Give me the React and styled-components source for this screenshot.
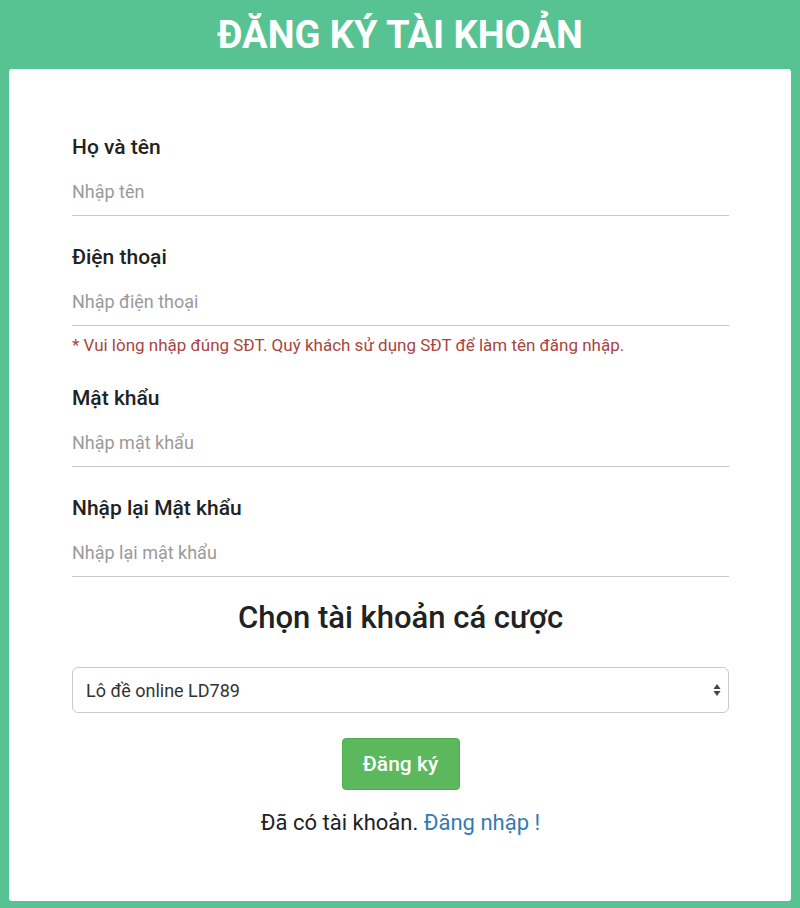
import React from "react";
import styled, { createGlobalStyle } from "styled-components";

const GlobalStyle = createGlobalStyle`
  html, body {
    margin: 0;
    padding: 0;
    background: #57c392;
  }
  * {
    box-sizing: border-box;
  }
`;

const Page = styled.div`
  min-height: 908px;
  background: #57c392;
  padding: 0 9px;
  font-family: Roboto, "Liberation Sans", sans-serif;
`;

const Header = styled.div`
  height: 69px;
  display: flex;
  align-items: center;
  justify-content: center;
`;

const Title = styled.h1`
  margin: 0;
  color: #fff;
  font-size: 38px;
  font-weight: 700;
  line-height: 64px;
`;

const Card = styled.div`
  background: #fff;
  border-radius: 3px;
  height: 832px;
  padding: 63px 62px 0 63px;
  display: flex;
  flex-direction: column;
`;

const Field = styled.div`
  display: flex;
  flex-direction: column;
  margin-bottom: ${(p) => (p.$tight ? "0" : "26px")};
`;

const Label = styled.label`
  font-size: 21px;
  font-weight: 500;
  color: #222;
  line-height: 30px;
`;

const Input = styled.input`
  border: none;
  border-bottom: 1px solid #c8c8c8;
  outline: none;
  height: 44px;
  margin-top: 10px;
  padding: 0 0 4px 0;
  font-family: Roboto, "Liberation Sans", sans-serif;
  font-size: 18px;
  color: #333;
  background: transparent;

  &::placeholder {
    color: #9a9a9a;
  }
`;

const Note = styled.p`
  margin: 9px 0 28px;
  font-size: 17px;
  color: #a94442;
  line-height: 20px;
`;

const Heading = styled.h2`
  margin: 21px 0 0;
  text-align: center;
  font-size: 31px;
  font-weight: 500;
  color: #222;
  line-height: 40px;
`;

const SelectWrap = styled.div`
  position: relative;
  margin-top: 29px;
`;

const Select = styled.select`
  appearance: none;
  width: 100%;
  height: 46px;
  border: 1px solid #c9c9c9;
  border-radius: 6px;
  padding: 0 30px 0 13px;
  font-family: Roboto, "Liberation Sans", sans-serif;
  font-size: 18px;
  color: #333;
  background: #fff;
  outline: none;
`;

const Arrows = styled.svg`
  position: absolute;
  right: 8px;
  top: 16px;
  pointer-events: none;
`;

const Button = styled.button`
  align-self: center;
  margin-top: 25px;
  width: 118px;
  height: 52px;
  border: 1px solid #4cae4c;
  border-radius: 4px;
  background: #5cb85c;
  color: #fff;
  font-family: Roboto, "Liberation Sans", sans-serif;
  font-size: 21px;
  font-weight: 500;
  cursor: pointer;
`;

const Footer = styled.p`
  margin: 22px 0 0;
  text-align: center;
  font-size: 22px;
  line-height: 22px;
  color: #222;
`;

const Link = styled.a`
  color: #337ab7;
  text-decoration: none;
`;

export default function App() {
  return (
    <Page>
      <GlobalStyle />
      <Header>
        <Title>ĐĂNG KÝ TÀI KHOẢN</Title>
      </Header>
      <Card>
        <Field>
          <Label>Họ và tên</Label>
          <Input placeholder="Nhập tên" />
        </Field>
        <Field $tight>
          <Label>Điện thoại</Label>
          <Input placeholder="Nhập điện thoại" />
        </Field>
        <Note>* Vui lòng nhập đúng SĐT. Quý khách sử dụng SĐT để làm tên đăng nhập.</Note>
        <Field>
          <Label>Mật khẩu</Label>
          <Input type="password" placeholder="Nhập mật khẩu" />
        </Field>
        <Field $tight>
          <Label>Nhập lại Mật khẩu</Label>
          <Input type="password" placeholder="Nhập lại mật khẩu" />
        </Field>
        <Heading>Chọn tài khoản cá cược</Heading>
        <SelectWrap>
          <Select defaultValue="ld789">
            <option value="ld789">Lô đề online LD789</option>
          </Select>
          <Arrows width="8" height="14" viewBox="0 0 8 14">
            <path d="M4 1 L7.5 6 L0.5 6 Z" fill="#444" />
            <path d="M4 13 L7.5 8 L0.5 8 Z" fill="#444" />
          </Arrows>
        </SelectWrap>
        <Button>Đăng ký</Button>
        <Footer>
          Đã có tài khoản. <Link href="#">Đăng nhập !</Link>
        </Footer>
      </Card>
    </Page>
  );
}
